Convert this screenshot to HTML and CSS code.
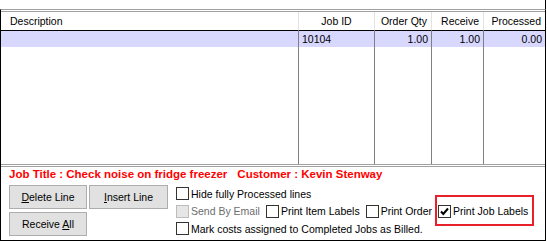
FILE: index.html
```html
<!DOCTYPE html>
<html lang="en">
<head>
    <meta charset="UTF-8">
    <title>Receive Purchase Order</title>
    <link rel="stylesheet" href="styles.css">
</head>
<body>
    <div class="top-strip"></div>
    <div class="frame">
        <div class="grid">
            <div class="col col-desc">
                <div class="head left">Description</div>
                <div class="cell sel"></div>
            </div>
            <div class="col col-job">
                <div class="head center">Job ID</div>
                <div class="cell sel left">10104</div>
            </div>
            <div class="col col-qty">
                <div class="head">Order Qty</div>
                <div class="cell sel">1.00</div>
            </div>
            <div class="col col-rec">
                <div class="head">Receive</div>
                <div class="cell sel">1.00</div>
            </div>
            <div class="col col-proc">
                <div class="head">Processed</div>
                <div class="cell sel">0.00</div>
            </div>
        </div>

        <div class="panel">
            <div class="job-title">
                <span>Job Title : Check noise on fridge freezer</span>
                <span>Customer : Kevin Stenway</span>
            </div>
            <div class="controls">
                <div class="buttons">
                    <div class="btn-row">
                        <button class="btn"><u>D</u>elete Line</button>
                        <button class="btn"><u>I</u>nsert Line</button>
                    </div>
                    <div class="btn-row">
                        <button class="btn">Receive <u>A</u>ll</button>
                    </div>
                </div>
                <div class="options">
                    <div class="opt-row">
                        <label class="opt"><span class="box"></span>Hide fully Processed lines</label>
                    </div>
                    <div class="opt-row">
                        <label class="opt disabled"><span class="box"></span>Send By Email</label>
                        <label class="opt"><span class="box"></span>Print Item Labels</label>
                        <label class="opt"><span class="box"></span>Print Order</label>
                        <label class="opt highlight"><span class="box checked"><svg width="11" height="11" viewBox="0 0 11 11"><path d="M2 5.5 L4.3 8 L9 2.5" fill="none" stroke="#000" stroke-width="2"/></svg></span>Print Job Labels</label>
                    </div>
                    <div class="opt-row">
                        <label class="opt"><span class="box"></span>Mark costs assigned to Completed Jobs as Billed.</label>
                    </div>
                </div>
            </div>
        </div>
    </div>
</body>
</html>
```

FILE: styles.css
```css
body {
    margin: 0;
    background-color: #ffffff;
    font-family: "Liberation Sans", Arial, sans-serif;
    font-size: 10.5px;
    color: #000;
}
.top-strip {
    width: 546px;
    height: 9px;
    box-sizing: border-box;
    border-right: 1px solid #000;
}
.frame {
    width: 546px;
    box-sizing: border-box;
    border-top: 1px solid #a0a0a0;
    border-left: 1px solid #000;
    border-right: 1px solid #000;
    border-bottom: 1px solid #000;
}

/* grid */
.grid {
    display: flex;
    height: 152px;
    margin-top: 1px;
    border-top: 1px solid #a0a0a0;
    border-bottom: 1px solid #a0a0a0;
}
.col {
    display: flex;
    flex-direction: column;
}
.col-desc { width: 297px; }
.col-job { width: 76px; }
.col-qty { width: 57px; }
.col-rec { width: 52px; }
.col-proc { flex: 1; }
.col + .col {
    background: linear-gradient(#808080, #808080) left 19px / 1px 100% no-repeat;
}
.head {
    height: 18px;
    line-height: 18px;
    border-bottom: 1px solid #000;
    padding: 0 4px;
    text-align: right;
    white-space: nowrap;
}
.col + .col .head {
    border-left: 1px solid #e3e3e3;
}
.cell {
    height: 16px;
    line-height: 16px;
    padding: 0 3px;
    text-align: right;
}
.col + .col .cell {
    border-left: 1px solid #808080;
}
.sel {
    background-color: #d8d8ff;
}
.head.left { text-align: left; padding-left: 9px; }
.head.center { text-align: center; }
.cell.left { text-align: left; }

/* bottom panel */
.panel {
    height: 73px;
    margin-top: 1px;
    border-top: 1px solid #a0a0a0;
    padding-left: 8px;
}
.job-title {
    color: #ff0000;
    font-weight: bold;
    font-size: 11.5px;
    height: 18px;
    line-height: 14px;
    display: flex;
    gap: 10px;
}
.controls {
    display: flex;
    gap: 8px;
}
.buttons {
    display: flex;
    flex-direction: column;
    gap: 3px;
}
.btn-row {
    display: flex;
    gap: 2px;
}
.btn {
    width: 78px;
    height: 24px;
    background-color: #e1e1e1;
    border: 1px solid #adadad;
    font-family: "Liberation Sans", Arial, sans-serif;
    font-size: 10.5px;
    color: #000;
    padding: 0;
}
.btn + .btn { width: 79px; }
.options {
    display: flex;
    flex-direction: column;
}
.opt-row {
    display: flex;
    gap: 6px;
    height: 17.5px;
    align-items: center;
}
.opt {
    display: flex;
    align-items: center;
    gap: 2px;
    white-space: nowrap;
}
.box {
    width: 11px;
    height: 11px;
    border: 1px solid #333333;
    background: #ffffff;
    display: inline-flex;
    align-items: center;
    justify-content: center;
}
.disabled {
    color: #6d6d6d;
}
.disabled .box {
    background: #e6e6e6;
    border-color: #bcbcbc;
}
.highlight {
    position: relative;
}
.highlight::after {
    content: "";
    position: absolute;
    left: -3px;
    right: -6px;
    top: -10px;
    bottom: -8px;
    border: 2px solid #e8202a;
}
```
